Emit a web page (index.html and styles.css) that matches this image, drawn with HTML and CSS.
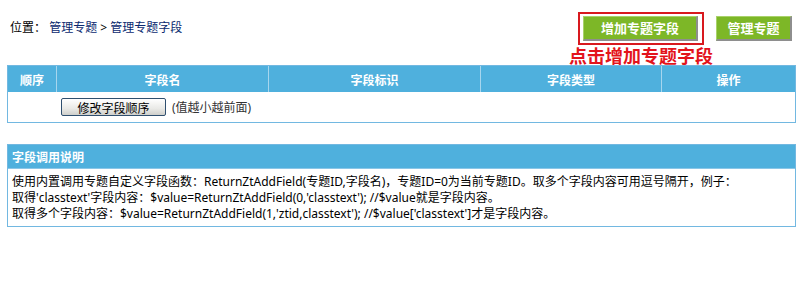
FILE: index.html
```html
<!DOCTYPE html>
<html>
<head>
<meta charset="utf-8">
<link rel="stylesheet" href="styles.css">
</head>
<body>
<div class="page">
  <div class="topbar">
    <div class="crumb">位置： <a href="#">管理专题</a> &gt; <a href="#">管理专题字段</a></div>
    <div class="actions">
      <span class="btn-green btn-add">增加专题字段</span>
      <span class="btn-green btn-manage">管理专题</span>
    </div>
    <div class="redbox"></div>
    <div class="note">点击增加专题字段</div>
  </div>

  <div class="grid-table">
    <div class="hcell c1">顺序</div>
    <div class="hcell sep">字段名</div>
    <div class="hcell sep">字段标识</div>
    <div class="hcell sep">字段类型</div>
    <div class="hcell sep">操作</div>
    <div class="bcell"></div>
    <div class="bcell span4"><span class="btn-gray">修改字段顺序</span><span class="hint">(值越小越前面)</span></div>
  </div>

  <div class="info">
    <div class="info-head">字段调用说明</div>
    <div class="info-body">
      <div>使用内置调用专题自定义字段函数：ReturnZtAddField(专题ID,字段名)，专题ID=0为当前专题ID。取多个字段内容可用逗号隔开，例子：</div>
      <div>取得'classtext'字段内容：$value=ReturnZtAddField(0,'classtext'); //$value就是字段内容。</div>
      <div>取得多个字段内容：$value=ReturnZtAddField(1,'ztid,classtext'); //$value['classtext']才是字段内容。</div>
    </div>
  </div>
</div>
</body>
</html>
```

FILE: styles.css
```css
html, body {
  margin: 0;
  padding: 0;
  background: #fff;
}
body {
  font-family: "Noto Sans", "Noto Sans CJK SC", sans-serif;
  font-size: 12px;
  color: #000;
}
.page {
  width: 789px;
  margin-left: 7px;
}
.topbar {
  position: relative;
  height: 56px;
  display: flex;
  align-items: center;
  justify-content: space-between;
  margin-bottom: 9px;
}
.crumb {
  padding-left: 3px;
  line-height: 16px;
}
.crumb a {
  color: #0b2a6f;
  text-decoration: none;
}
.actions {
  display: flex;
  gap: 18px;
  padding-right: 4px;
}
.btn-green {
  display: flex;
  align-items: center;
  justify-content: center;
  height: 25px;
  box-sizing: border-box;
  background: #7db727;
  color: #fff;
  font-weight: bold;
  font-size: 13px;
  font-family: "Noto Sans CJK SC", sans-serif;
  border-right: 2px solid #8e8e8e;
  border-bottom: 2px solid #8e8e8e;
  border-top: 1px solid #a9d26a;
  border-left: 1px solid #a9d26a;
}
.btn-add { width: 115px; }
.btn-manage { width: 76px; }
.redbox {
  position: absolute;
  left: 571px;
  top: 12px;
  width: 122px;
  height: 29px;
  border: 2px solid #d8191e;
}
.note {
  position: absolute;
  left: 562px;
  top: 45px;
  color: #e3141b;
  font-family: "Noto Sans CJK SC", serif;
  font-weight: bold;
  font-size: 18px;
  line-height: 20px;
}
.grid-table {
  display: grid;
  grid-template-columns: 48px 212px 212px 181px 134px;
  border: 1px solid #72b8e1;
  margin-bottom: 21px;
}
.hcell {
  height: 26px;
  background: #4fb0dd;
  color: #fff;
  font-weight: bold;
  font-family: "Noto Sans CJK SC", sans-serif;
  font-size: 12px;
  display: flex;
  align-items: center;
  justify-content: center;
  box-sizing: border-box;
}
.hcell.sep {
  border-left: 1px solid #a7d6ee;
}
.bcell {
  height: 30px;
  display: flex;
  align-items: center;
}
.span4 {
  grid-column: span 4;
  padding-left: 5px;
}
.btn-gray {
  display: inline-flex;
  align-items: center;
  justify-content: center;
  width: 105px;
  height: 18px;
  box-sizing: border-box;
  border: 1px solid #2f4f6f;
  border-radius: 2px;
  background: linear-gradient(#ffffff, #e9e9e6 60%, #cfcfcb);
  font-family: "Noto Sans CJK SC", sans-serif;
  font-size: 12px;
  color: #000;
}
.hint {
  margin-left: 6px;
  color: #333;
}
.info {
  border: 1px solid #72b8e1;
}
.info-head {
  height: 23px;
  background: #4fb0dd;
  color: #fff;
  font-weight: bold;
  font-family: "Noto Sans CJK SC", sans-serif;
  display: flex;
  align-items: center;
  padding-left: 4px;
  border-bottom: 1px solid #8ac6e7;
}
.info-body {
  padding: 5px 4px 4px 4px;
  line-height: 16px;
}
```
